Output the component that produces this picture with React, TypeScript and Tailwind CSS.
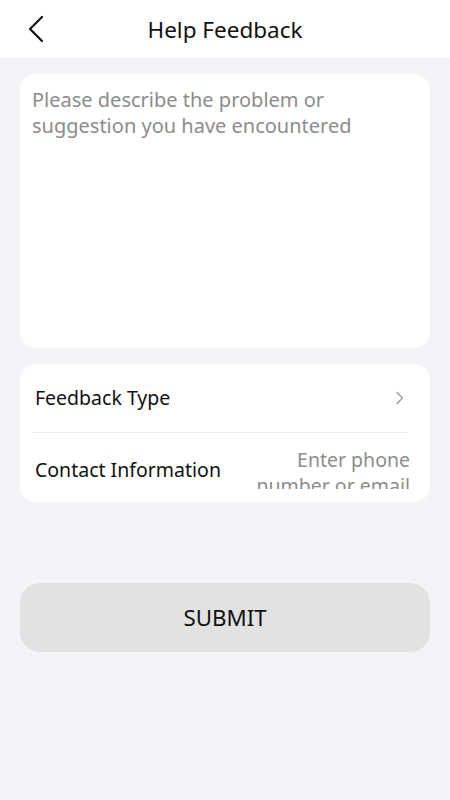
import React from "react";

export default function App() {
  const font = { fontFamily: '"Noto Sans", "Open Sans", sans-serif' };
  return (
    <div className="w-[450px] h-[800px] bg-[#f4f4f8] flex flex-col" style={font}>
      <div className="h-[58px] bg-white relative flex items-center justify-center shrink-0">
        <svg className="absolute left-[26px] top-[15px]" width="20" height="28" viewBox="0 0 20 28" fill="none">
          <path d="M16 2 L4 14 L16 26" stroke="#111" strokeWidth="2.2" strokeLinecap="round" strokeLinejoin="round" />
        </svg>
        <span className="text-[22.5px] text-[#111] leading-none mt-[2px]">Help Feedback</span>
      </div>
      <div className="px-5 pt-4 flex flex-col">
        <div className="h-[274px] bg-white rounded-[16px] px-3 pt-[13px]">
          <p className="text-[20px] leading-[26px] text-[#8c8c8c] max-w-[340px]">
            Please describe the problem or suggestion you have encountered
          </p>
        </div>
        <div className="mt-4 h-[138px] bg-white rounded-[16px] pl-3 pr-[22px] overflow-hidden">
          <div className="h-[69px] flex items-center justify-between border-b border-[#ebebeb] pl-[3px]">
            <span className="text-[19.5px] text-[#111]">Feedback Type</span>
            <svg width="10" height="14" viewBox="0 0 10 14" fill="none" className="mr-[3px]">
              <path d="M2 1.5 L7.5 7 L2 12.5" stroke="#9a9a9a" strokeWidth="1.4" strokeLinecap="round" strokeLinejoin="round" />
            </svg>
          </div>
          <div className="h-[69px] flex items-start justify-between pl-[3px]">
            <span className="text-[19.5px] text-[#111] mt-[22px]">Contact Information</span>
            <div className="mt-[14px] h-[42px] overflow-hidden w-[170px] -mr-[2px]">
              <p className="text-[19.5px] text-[#8c8c8c] text-right leading-[26px]">
                Enter phone number or email
              </p>
            </div>
          </div>
        </div>
        <button className="mt-[81px] h-[69px] bg-[#e2e2e2] rounded-[20px] flex items-center justify-center">
          <span className="text-[22.3px] text-[#111]">SUBMIT</span>
        </button>
      </div>
    </div>
  );
}
